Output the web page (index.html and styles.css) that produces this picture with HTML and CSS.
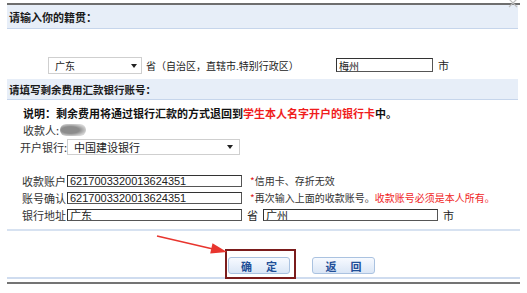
FILE: index.html
```html
<!DOCTYPE html>
<html lang="zh-CN">
<head>
    <meta charset="UTF-8">
    <title>填写籍贯与银行账号</title>
    <link rel="stylesheet" href="styles.css">
</head>
<body>
    <div class="dialog">
        <div class="band">请输入你的籍贯：</div>
        <div class="origin">
            <div class="select select-prov"><span>广东</span><i class="caret"></i></div>
            <span class="prov">省（自治区，直辖市.特别行政区）</span>
            <input class="field field-city" type="text" value="梅州">
            <span class="unit">市</span>
        </div>

        <div class="band band-small">请填写剩余费用汇款银行账号：</div>
        <div class="bank">
            <p class="note">说明：剩余费用将通过银行汇款的方式退回到<span class="red">学生本人名字开户的银行卡</span>中。</p>
            <div class="row row-payee">
                <span class="label">收款人:</span>
                <span class="blur"></span>
            </div>
            <div class="row row-bank">
                <span class="label label-bank">开户银行:</span>
                <div class="select select-bank"><span>中国建设银行</span><i class="caret"></i></div>
            </div>

            <div class="row row-acct first">
                <span class="label label-acct">收款账户</span>
                <input class="field" type="text" value="6217003320013624351">
                <span class="hint"><b>*</b>信用卡、存折无效</span>
            </div>
            <div class="row row-acct">
                <span class="label label-acct">账号确认</span>
                <input class="field" type="text" value="6217003320013624351">
                <span class="hint"><b>*</b>再次输入上面的收款账号。<em>收款账号必须是本人所有。</em></span>
            </div>
            <div class="row row-acct">
                <span class="label label-acct">银行地址</span>
                <input class="field" type="text" value="广东">
                <span class="unit">省</span>
                <input class="field field-right" type="text" value="广州">
                <span class="unit">市</span>
            </div>
        </div>

        <div class="actions">
            <div class="focus">
                <button class="btn" type="button"><span>确</span><span>定</span></button>
            </div>
            <button class="btn btn-back" type="button"><span>返</span><span>回</span></button>
        </div>
    </div>

    <!-- annotation arrow and close mark drawn over the page -->
    <svg class="overlay" width="527" height="293" viewBox="0 0 527 293">
        <path d="M509 -1 L517 7 M517 -1 L509 7" stroke="#bdbdbd" stroke-width="1.2" fill="none"/>
        <line x1="157" y1="236" x2="213" y2="249" stroke="#e8352e" stroke-width="1.6"/>
        <polygon points="227,252 212.5,243.2 210.2,253.6" fill="#e8352e"/>
    </svg>
</body>
</html>
```

FILE: styles.css
```css
body {
    margin: 0;
    width: 527px;
    height: 293px;
    position: relative;
    background: #fff;
    font-family: "Noto Sans CJK SC", "Liberation Sans", sans-serif;
    font-size: 11px;
    color: #333;
}
.dialog {
    margin: 3px 0 0 7px;
    width: 513px;
    border-top: 2px solid #6e6e6e;
    border-bottom: 2px solid #747474;
}
.band {
    height: 23px;
    margin-right: 2px;
    padding-left: 2px;
    display: flex;
    align-items: center;
    background: #e7eef8;
    border-bottom: 1px solid #c6d5eb;
    font-size: 11px;
    font-weight: bold;
    color: #1a1a1a;
}
.band-small {
    height: 20px;
    font-size: 10.5px;
}

/* origin row */
.origin {
    height: 50px;
    box-sizing: border-box;
    padding: 28px 0 0 41px;
    display: flex;
    align-items: flex-start;
}
.select {
    height: 17px;
    box-sizing: border-box;
    border: 1px solid #cfcfcf;
    display: flex;
    align-items: center;
    justify-content: space-between;
    padding: 0 4px 0 6px;
    background: #fff;
    color: #222;
}
.select-prov {
    width: 94px;
    font-size: 10px;
}
.caret {
    width: 0;
    height: 0;
    border-left: 3px solid transparent;
    border-right: 3px solid transparent;
    border-top: 4px solid #222;
}
.prov {
    width: 190px;
    margin-left: 4px;
    line-height: 17px;
    font-size: 10px;
    color: #222;
}
.field {
    height: 12px;
    width: 175px;
    box-sizing: border-box;
    margin: 0;
    padding: 0 2px;
    border: 1px solid #555;
    border-top-color: #333;
    border-left-color: #333;
    font-family: "Liberation Sans", "Noto Sans CJK SC", sans-serif;
    font-size: 11px;
    line-height: 10px;
    color: #222;
    outline: none;
}
.field-city {
    width: 97px;
    height: 14px;
    margin-top: 1px;
    font-size: 10px;
}
.unit {
    margin-left: 5px;
    line-height: 17px;
    color: #222;
}

/* bank section */
.bank {
    padding: 5px 0 5px 0;
    border-bottom: 2px solid #d7e2f1;
}
.note {
    margin: 0;
    padding-left: 16px;
    height: 16px;
    line-height: 16px;
    font-weight: bold;
    color: #111;
}
.red {
    color: #f01d1d;
}
.row {
    display: flex;
    align-items: center;
    height: 17px;
}
.row-payee {
    padding-left: 16px;
}
.label {
    white-space: nowrap;
    color: #333;
}
.blur {
    width: 26px;
    height: 12px;
    margin-left: 1px;
    border-radius: 6px;
    background: radial-gradient(ellipse at 40% 50%, #8c8c8c 0 40%, #cfcfcf 72%, #efefef 100%);
    filter: blur(0.6px);
}
.row-bank {
    height: 18px;
    padding-left: 13px;
}
.label-bank {
    width: 47px;
}
.select-bank {
    width: 173px;
    height: 16px;
    font-size: 11px;
    padding-left: 6px;
    padding-right: 6px;
}
.row-acct {
    padding-left: 15px;
}
.row-acct.first {
    margin-top: 16px;
}
.row-acct + .row-acct {
    height: 17.5px;
}
.label-acct {
    width: 45px;
}
.hint {
    margin-left: 8px;
    font-size: 10px;
    color: #333;
    white-space: nowrap;
}
.hint b {
    color: #e02020;
    font-weight: normal;
}
.hint em {
    font-style: normal;
    color: #f01d1d;
}
.field-right {
    margin-left: 5px;
}

/* buttons */
.actions {
    height: 48px;
    box-sizing: border-box;
    padding: 18px 0 0 218px;
    margin-bottom: 3px;
    border-bottom: 2px solid #cfdcef;
    display: flex;
    align-items: flex-start;
}
.focus {
    border: 2px solid #7b1c1c;
    padding: 6px 4px 3px 1px;
}
.btn {
    width: 62px;
    height: 17px;
    margin: 0;
    padding: 0;
    display: flex;
    align-items: center;
    justify-content: center;
    gap: 14px;
    border: 1px solid #aac2e0;
    border-radius: 3px;
    background: linear-gradient(#f7faff, #dae6f6);
    font-family: "Noto Sans CJK SC", sans-serif;
    font-size: 11px;
    font-weight: bold;
    color: #1f4f98;
}
.btn-back {
    width: 63px;
    margin: 8px 0 0 16px;
}
.overlay {
    position: absolute;
    left: 0;
    top: 0;
    pointer-events: none;
}
```
